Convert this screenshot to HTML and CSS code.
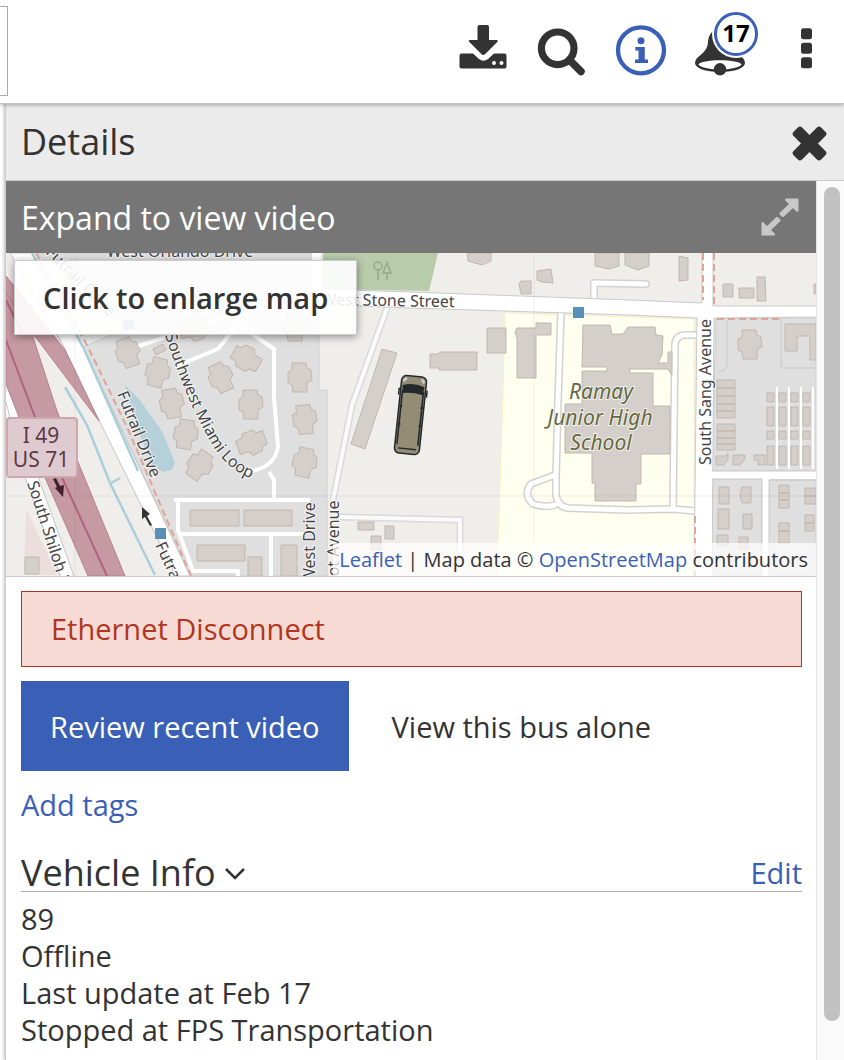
FILE: index.html
```html
<!DOCTYPE html>
<html lang="en">
<head>
<meta charset="utf-8">
<meta name="viewport" content="width=device-width, initial-scale=1">
<title>Vehicle details</title>
<link rel="stylesheet" href="styles.css">
</head>
<body>
<div class="app">
  <header class="toolbar">
    <div class="toolbar-field"></div>
    <nav class="tools" aria-label="Tools">
      <button class="tool" type="button" aria-label="Download">
        <svg width="48" height="52" viewBox="458 24 48 52"><path class="ink" d="M460.500 53.500h11.500l6 5.500q4.500 3.500 9 0l6-5.500h10.500q2 0 2 2v11q0 2-2 2h-43q-2 0-2-2v-11q0-2 2-2z"/><path class="halo" d="M478.500 25h7.500q2 0 2 2v13h8q1.500.5.500 1.800l-12.500 12.500q-1.700 1.300-3.400 0l-12.500-12.500q-1-1.300.5-1.800h7.900v-13q0-2 2-2z"/><circle class="hole" cx="493" cy="63" r="2"/><circle class="hole" cx="500.500" cy="63" r="2"/></svg>
      </button>
      <button class="tool" type="button" aria-label="Search">
        <svg width="48" height="52" viewBox="537 24 48 52"><circle cx="557.700" cy="48.300" r="16.300" fill="none" stroke="#333" stroke-width="7.200"/><path d="M571 61.500l10 10" stroke="#333" stroke-width="7.500" stroke-linecap="round"/></svg>
      </button>
      <button class="tool" type="button" aria-label="Information">
        <svg width="52" height="52" viewBox="615 24 52 52"><circle cx="641" cy="50.300" r="23" fill="none" stroke="#3a5fb6" stroke-width="4.300"/><circle cx="641" cy="40.700" r="3.500" fill="#3a5fb6"/><path fill="#3a5fb6" d="M635.300 47h9.500v12.500h3.200v3.500h-13v-3.500h3.500v-9h-3.200z"/></svg>
      </button>
      <button class="tool tool-alerts" type="button" aria-label="Notifications, 17">
        <svg width="52" height="52" viewBox="694 24 52 52"><path class="ink" fill-rule="evenodd" d="M720 29c-8 0-11.500 6-12 13-.5 7-4 10-8 13.500-3 2.500-5 4.500-5 7.500 0 5 10 9 25 9s25-4 25-9c0-3-2-5-5-7.500-4-3.500-7.500-6.500-8-13.500-.5-7-4-13-12-13zM720 60.200c11 0 20.500 1.800 21.500 4-.8 2.500-8 4.300-15.500 5a6.200 6.200 0 0 0-12 0c-7.500-.7-14.700-2.500-15.500-5 1-2.200 10.500-4 21.500-4z"/><circle class="ink" cx="720" cy="69.300" r="6.200"/></svg>
        <span class="badge">17</span>
      </button>
      <button class="tool tool-more" type="button" aria-label="More">
        <svg width="12" height="52" viewBox="801 24 12 52"><rect class="ink" x="801" y="28.300" width="11" height="11" rx="2.500"/><rect class="ink" x="801" y="42.800" width="11" height="11" rx="2.500"/><rect class="ink" x="801" y="57.300" width="11" height="11" rx="2.500"/></svg>
      </button>
    </nav>
  </header>

  <main class="panel">
    <div class="panel-head">
      <h1>Details</h1>
      <button class="plain" type="button" aria-label="Close">
        <svg width="35" height="35" viewBox="0 0 35 35"><g class="ink"><rect x="-2" y="11.500" width="39" height="12" rx="3" transform="rotate(45 17.500 17.500)"/><rect x="-2" y="11.500" width="39" height="12" rx="3" transform="rotate(-45 17.500 17.500)"/></g></svg>
      </button>
    </div>
    <div class="panel-body">
      <div class="content">
        <button class="expand" type="button">
          <span>Expand to view video</span>
          <svg width="38" height="38" viewBox="0 0 38 38" fill="#c8c8c8"><path d="M25 .5h12.500V13q-.8 1.500-2 .5L32 10l-9.500 9-1.500-.3-2.500-2.500V15L28 6l-3.700-3.500Q23.500 1 25 .5zM13 37.500H.5V25q.8-1.500 2-.5L6 28l9.500-9 1.500.3 2.500 2.500V23L10 32l3.700 3.500q.8 1.500-.7 2z"/></svg>
        </button>

        <section class="map">
          <svg class="map-art" viewBox="6 253 810 323" preserveAspectRatio="xMidYMid slice" role="img" aria-label="Street map with the bus position">
            <defs>
              <path id="home" class="bld" d="M-8-14h14l1 5 4 2 1 10-5 3v9h-14l-1-7-4-2v-11l4-2z"/>
              <path id="miami" d="M165 335Q187 403 213 446Q228 470 254 480"/>
              <g id="strip"><path class="bld" d="M-4 0h7v19h-7zM-4 24h7v8h-7zM-4 39h7v19h-7zM-4-14h7v9h-7z"/><path d="M6-20v82" stroke="#fff" stroke-width="2"/></g>
            </defs>
            <path fill="#f0eeeb" d="M6 253h810v323H6z"/>
            <!-- housing areas -->
            <path fill="#dfdfdf" stroke="#cfcfcf" d="M36 253h276v37l7 1v99h8v186H191L83 347l42-18z"/>
            <path fill="#dfdfdf" stroke="#cfcfcf" d="M716 318h100v153H712zM712 479h50l-1 97h-50zM769 480h47v96h-48z"/>
            <path fill="#b8cbab" d="M323 253h115l-9 38-106-2z"/>
            <path fill="#feffee" stroke="#f6f2c4" d="M505 313l189 6v257H497l5-150z"/>
            <path fill="#ecdedd" d="M26 508l31 67H24z"/>
            <path fill="#b6d0d9" d="M125 385l15 15 23 33 12 30-3 7-9 2-11-6-16-42z"/>
            <!-- highway, ramp and frontage road -->
            <path fill="#fff" stroke="#c5c5c5" d="M10 253h22l51 94 107 229h-14L94 410 63 345z"/>
            <path fill="none" stroke="#fff" stroke-width="12" d="M6 392l25 82 37 102"/>
            <path fill="none" stroke="#c4c4c4" d="M6 402l20 78 34 96M13 392l24 82 37 102"/>
            <path fill="#c69aa3" stroke="#b97f90" d="M6 276l59 74 34 71-62-82L6 306z"/>
            <path fill="#c69aa3" stroke="#b97f90" d="M6 292l27 45 24 74 68 165H88L22 425 6 384z"/>
            <path fill="none" stroke="#b0637d" stroke-width="2" d="M6 300l17 35M6 340l32 85 69 151"/>
            <path fill="none" stroke="#abcfda" stroke-width="2.500" d="M65 387l22 38 23 58 45 92M111 483l9-5M32 253l52 96 54 122"/>
            <path class="path-red" d="M36 253l52 94 39 80 64 149"/>
            <path fill="#43202d" d="M53 479l3-1 4 8 4-1-1 12-8-9 2-1z"/>
            <path fill="#333" d="M142 507l8 7-3 2 5 9-2 1-5-9-3 2z"/>
            <!-- streets -->
            <g fill="none" stroke="#d2d2d2" stroke-width="8" stroke-linejoin="round" stroke-linecap="round">
              <path d="M561 313l-3 87-2 77v18q2 12 12 13l60 2 45-1 22 2M673 509l2-165q1-8 9-9h14M555 475l-24 9q-8 10 2 20 12 4 22 1M594 301v-18l52 1"/>
            </g>
            <g fill="none" stroke="#fff" stroke-width="5" stroke-linejoin="round" stroke-linecap="round">
              <path d="M561 313l-3 87-2 77v18q2 12 12 13l60 2 45-1 22 2M673 509l2-165q1-8 9-9h14M555 475l-24 9q-8 10 2 20 12 4 22 1M594 301v-18l52 1"/>
            </g>
            <path fill="none" stroke="#fff" stroke-width="4" stroke-linejoin="round" d="M174 500h136M178 500v30l15 41h45v5M180 534h125M271 534v42M274 498v-18l-5-8M244 472q30-2 34-25l-4-50v-48l-36-25-20 25-42 17M126 350l185-60"/>
            <path fill="none" stroke="#d9d9d9" stroke-width="7" d="M387 308l-35 97-19 95M340 517l120 3v30"/>
            <path fill="none" stroke="#fafafa" stroke-width="4" d="M387 308l-35 97-19 95M340 517l120 3v40"/>
            <path fill="#fff" stroke="#c9c9c9" d="M317 289l93 3 220 8 72 3v-50h11v53h104v11l-103 1-2 258h-18l3-258-67-3-220-7-93-4z"/>
            <path fill="#fff" d="M312 253h9v53h-9zM704 253h8v323h-16l2-258h6zM712 471h105v8H712zM762 478h7v98h-7z"/>
            <path fill="none" stroke="#c9c9c9" d="M712 471h104M712 479h50v97M769 576v-96h47M727 320v44q-1 8-9 8M781 318v50h35"/>
            <path class="path-red" d="M703 253v47M714 253v53M717 319h64M695 516v60"/>
            <!-- buildings -->
            <use href="#home" transform="translate(128 352)rotate(-20)"/>
            <use href="#home" transform="translate(158 372)rotate(15)"/>
            <use href="#home" transform="translate(172 403)rotate(-10)"/>
            <use href="#home" transform="translate(186 434)rotate(10)"/>
            <use href="#home" transform="translate(200 465)rotate(35)"/>
            <use href="#home" transform="translate(195 329)rotate(80)"/>
            <use href="#home" transform="translate(221 377)rotate(-25)"/>
            <use href="#home" transform="translate(246 358)rotate(-60)"/>
            <use href="#home" transform="translate(251 404)"/>
            <use href="#home" transform="translate(252 443)rotate(70)"/>
            <use href="#home" transform="translate(300 377)"/>
            <use href="#home" transform="translate(305 419)rotate(-5)"/>
            <use href="#home" transform="translate(305 462)rotate(12)"/>
            <use href="#home" transform="translate(295 326)"/>
            <use href="#home" transform="translate(750 344)"/>
            <g class="bld">
              <path d="M153 349l10-5 3 6-10 5zM190 510h49v16h-49zM244 510h48v16h-48zM197 545h48v16h-48zM281 545h16v31h-16zM248 557h14v19h-14zM25 557h14v17H25z"/>
              <path d="M382 349l15 4-32 96-14-5z"/>
              <path d="M430 354h8l2-2h37v18h-38v-2h-9zM487 328h19v25h-19zM517 328h19v-5h15v12h-15v43h-19v-40l-2-6zM519 284l2-3h10v13h-10zM537 271l14-2 2 14-11-1-5-2zM467 253h24v8l-9 4-14-4zM595 253h24v13l-10 3-14-3zM625 253h24v13l-11 4-13-5zM679 256l9 2v22l-9 1zM723 284h10v13h-10zM739 288h15v10h-15zM757 277h8l1 24h-9zM814 284h2v10h-2z"/>
              <path d="M583 325h27l2 9h11l5-7h27l1 8 7 1-1 19-4 8h10v-11h4v23l-4-6h-38v4h23v33h17v48h-29v30h-5v17h-41v-18h-3v-30h-27v-49h17v-33h25v-4h-25z"/>
              <path d="M717 380h18v8h-18zM717 388h18v8h-18zM717 396h18v8h-18zM717 404h18v7h-18zM717 411h18v7h-18zM717 424h18v7h-18zM717 431h18v7h-18zM717 438h18v6h-18zM717 444h18v6h-18z"/>
              <path d="M716 456h10l2-3v6l-4 6h-8zM733 455h12v4l-5 6h-7zM754 455h11v10h-7v-5h-4zM719 487h10v17h-10zM742 487h9v16h-9l-2-8zM718 509h11v20h-11zM743 514h9v15h-9zM717 535h11v11h-11zM739 537h9v12h-9z"/>
              <path d="M779 485h10v8h-10zM779 493h10v7h-10zM779 500h10v8h-10zM805 488h11v8h-11zM805 496h11v8h-11zM805 515h9v8h-9zM805 523h9v8h-9zM779 523h10v8h-10zM779 531h10v12h-10z"/>
              <path d="M785 324h31v36h-6v-24h-13v15h-12zM358 522h16v8h-16zM385 526h9v13h-9zM371 536h10v14h-10z"/>
            </g>
            <use href="#strip" x="771" y="407"/><use href="#strip" x="783" y="407"/><use href="#strip" x="795" y="407"/><use href="#strip" x="807" y="407"/>
            <path d="M6 496h810M534 253v323M75 253v323" stroke="#000" stroke-opacity=".06"/>
            <g fill="none" stroke="#93ab86" stroke-width="1.500"><circle cx="378" cy="266" r="4"/><path d="M378 270v10M387 263l-4 10h8zM387 273v7"/></g>
            <path fill="#5a8fb8" d="M573 307h11v11h-11zM155 528h11v11h-11zM123 320h11v10h-11z"/>
            <rect x="7" y="418" width="70" height="59" rx="3" fill="#dfcbcf" stroke="#cda6ae" stroke-width="2"/>
            <!-- names -->
            <g class="place">
              <text class="shield" x="41" y="443">I 49</text><text class="shield" x="41" y="467">US 71</text>
              <text x="180" y="257" class="road">West Orlando Drive</text>
              <text x="388" y="306" class="road" transform="rotate(1 388 306)">West Stone Street</text>
              <text class="road-start"><textPath href="#miami">Southwest Miami Loop</textPath></text>
              <text class="road" transform="translate(134 436)rotate(68)">Futrail Drive</text>
              <text class="road-start" transform="translate(27 483)rotate(72)">South Shiloh Drive</text>
              <text class="road-start" transform="translate(155 545)rotate(65)">Futrail Drive</text>
              <text class="road-start" transform="translate(315 583)rotate(-90)">West Drive</text>
              <text class="road-start" transform="translate(339 586)rotate(-90)">oot Avenue</text>
              <text class="road" transform="translate(711 392)rotate(-90)">South Sang Avenue</text>
              <text class="school" x="601" y="399">Ramay</text><text class="school" x="600" y="425">Junior High</text><text class="school" x="601" y="450">School</text>
              <text class="road-start" x="45" y="253" transform="rotate(45 45 253)">Futrail Drive</text>
            </g>
            <!-- bus -->
            <g transform="translate(410.500 415)rotate(6)">
              <rect x="-12.500" y="-39" width="25" height="78" rx="5" fill="#948d76" stroke="#23282b" stroke-width="1.500"/>
              <path d="M-10.500-24v54M10.500-24v54" stroke="#23282b" stroke-width="1.600"/>
              <path fill="#23282b" d="M-11-29q11-4 22 0l-1 8q-10-2-20 0z"/>
              <path d="M-14-26v7M14-26v7M-12-8h3M12-8H9M-12 10h3M12 10H9M-9 34H9" stroke="#23282b" stroke-width="1.500"/>
              <path d="M-10.500-33l3-3.500M10.500-33l-3-3.500" stroke="#c9ccd0" stroke-width="2.500"/>
            </g>
          </svg>
          <button class="enlarge" type="button">Click to enlarge map</button>
          <p class="credit"><a href="#leaflet">Leaflet</a> | Map data © <a href="#osm">OpenStreetMap</a> contributors</p>
        </section>

        <div class="details">
          <div class="alert" role="alert">Ethernet Disconnect</div>
          <div class="actions">
            <button class="btn btn-primary" type="button">Review recent video</button>
            <button class="btn" type="button">View this bus alone</button>
          </div>
          <a class="tags" href="#tags">Add tags</a>
          <section class="info">
            <div class="info-head">
              <h2><button class="plain info-toggle" type="button">Vehicle Info
                <svg width="22" height="14" viewBox="0 0 22 14"><path d="M2 3l9 9 9-9" fill="none" stroke="#333" stroke-width="2.500"/></svg></button></h2>
              <a href="#edit">Edit</a>
            </div>
            <p>89</p>
            <p>Offline</p>
            <p>Last update at Feb 17</p>
            <p>Stopped at FPS Transportation</p>
          </section>
        </div>
      </div>
      <div class="scroll-track"><div class="scroll-thumb"></div></div>
    </div>
  </main>
</div>
</body>
</html>
```
FILE: styles.css
```css
* { box-sizing: border-box; }
body {
  margin: 0;
  font: 29px/37px "Open Sans", "Noto Sans", sans-serif;
  color: #333;
  background: #fff;
}
h1, h2, p { margin: 0; font-weight: 400; }
button { font: inherit; color: inherit; cursor: pointer; }
a { color: #3a5fb6; text-decoration: none; }
svg { display: block; }

.app { display: flex; flex-direction: column; min-height: 100vh; }
.toolbar {
  position: relative;
  z-index: 1;
  display: flex;
  justify-content: space-between;
  height: 104px;
  border-bottom: 1px solid #c6c6c6;
  box-shadow: 0 1px 4px rgba(0, 0, 0, .3);
  background: #fff;
}
.toolbar-field { width: 8px; height: 90px; margin-top: 6px; border: 1px solid #aaa; border-left: 0; }
.tools { display: flex; align-items: flex-start; gap: 30px; padding: 24px 31px 0 0; }
.tool, .plain { padding: 0; border: 0; background: none; }
.tool-alerts { position: relative; margin-left: -3px; }
.tool-more { margin-left: 25px; }
.ink { fill: #333; }
.hole { fill: #fff; }
.halo { fill: #333; stroke: #fff; stroke-width: 3px; paint-order: stroke; }
.badge {
  position: absolute;
  top: -12px;
  left: 20px;
  width: 44px;
  height: 44px;
  border: 3px solid #3a5fb6;
  border-radius: 50%;
  background: #fff;
  box-shadow: 0 0 0 2px #fff;
  color: #000;
  font-size: 24px;
  font-weight: 700;
  line-height: 36px;
}

.panel {
  flex: 1;
  display: flex;
  flex-direction: column;
  margin-left: 5px;
  border-left: 1px solid #ccc;
  box-shadow: -1px 0 3px rgba(0, 0, 0, .25);
}
.panel-head {
  display: flex;
  justify-content: space-between;
  align-items: center;
  height: 77px;
  padding: 2px 17px 0 15px;
  border-bottom: 1px solid #ccc;
  background: #ebebeb;
}
h1, h2 { font-size: 36px; line-height: 48px; }
h1 { padding-bottom: 2px; }
.panel-body { flex: 1; display: flex; }
.content { flex: 1; min-width: 0; }
.expand {
  display: flex;
  justify-content: space-between;
  align-items: center;
  width: 100%;
  height: 72px;
  padding: 0 17px 0 15px;
  border: 0;
  background: #767676;
  color: #fff;
  font-size: 32px;
}
.map { position: relative; border-bottom: 1px solid #ccc; }
.map-art { width: 100%; height: 323px; }
.bld { fill: #d4cfca; stroke: #c3b6ae; stroke-width: 1px; }
.path-red { fill: none; stroke: #dfa399; stroke-width: 2px; stroke-dasharray: 7 4; }
.place { font-family: "Noto Sans", sans-serif; font-size: 16px; fill: #444; }
.place text { paint-order: stroke; stroke: #fff; stroke-opacity: .7; stroke-width: 2px; }
.place .road, .place .shield, .place .school { text-anchor: middle; }
.place .shield { font-size: 21px; fill: #603749; stroke: none; }
.place .school { font-size: 21px; font-style: italic; fill: #66683f; }
.enlarge {
  position: absolute;
  top: 7px;
  left: 8px;
  padding: 18px 28px;
  border: 1px solid #ccc;
  background: rgba(255, 255, 255, .9);
  box-shadow: 0 2px 8px rgba(0, 0, 0, .4);
  font-weight: 600;
}
.credit {
  position: absolute;
  right: 0;
  bottom: 0;
  padding: 0 8px 0 6px;
  background: rgba(255, 255, 255, .7);
  font-size: 20px;
  line-height: 33px;
}

.details { padding: 14px 14px 11px 15px; }
.alert {
  padding: 18px 29px 19px;
  border: 1px solid #b03620;
  background: #f8dad5;
  color: #b03620;
}
.actions { display: flex; gap: 14px; margin: 14px 0 15px; }
.btn { height: 90px; padding: 0 29px; border: 0; background: none; }
.btn-primary { background: #3a5fb6; color: #fff; }
.tags { display: inline-block; }
.info { margin-top: 31px; }
.info-head {
  display: flex;
  justify-content: space-between;
  align-items: center;
  margin-bottom: 8px;
  border-bottom: 1px solid #aaa;
}
.info-head h2, .info-toggle { line-height: 37px; }
.info-toggle { display: flex; align-items: center; gap: 8px; }

.scroll-track { width: 28px; padding: 6px 4px 39px 7px; border-left: 1px solid #e4e4e4; background: #fafafa; }
.scroll-thumb { height: 100%; border-radius: 8px; background: #c1c1c1; }
```
